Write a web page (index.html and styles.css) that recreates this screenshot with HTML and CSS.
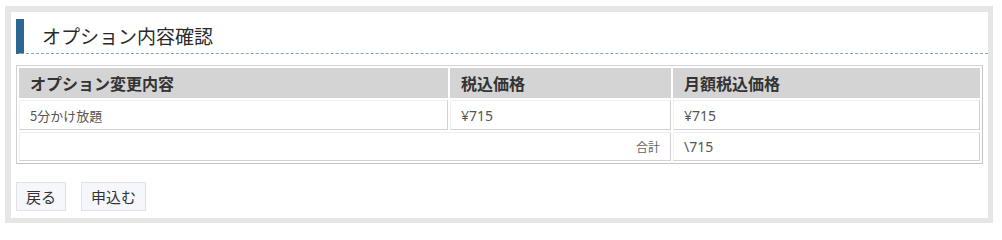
FILE: index.html
```html
<!DOCTYPE html>
<html lang="ja">
<head>
<meta charset="utf-8">
<title>オプション内容確認</title>
<link rel="stylesheet" href="styles.css">
</head>
<body>
<div class="frame">
  <h2 class="heading">オプション内容確認</h2>
  <table class="options">
    <colgroup>
      <col class="c1"><col class="c2"><col class="c3">
    </colgroup>
    <thead>
      <tr><th>オプション変更内容</th><th>税込価格</th><th>月額税込価格</th></tr>
    </thead>
    <tbody>
      <tr><td>5分かけ放題</td><td class="num">¥715</td><td class="num">¥715</td></tr>
      <tr><td colspan="2" class="total-label">合計</td><td class="num">\715</td></tr>
    </tbody>
  </table>
  <div class="actions">
    <button class="btn" type="button">戻る</button>
    <button class="btn" type="button">申込む</button>
  </div>
</div>
</body>
</html>
```
FILE: styles.css
```css
html, body {
  margin: 0;
  padding: 0;
  background: #ffffff;
}
body {
  font-family: "Noto Sans CJK JP", "Noto Sans", sans-serif;
  color: #333333;
}
.frame {
  margin: 6px 9px 9px 5px;
  border-style: solid;
  border-color: #e6e6e6;
  border-width: 6px 5px 5px 6px;
  background: #ffffff;
  padding: 7px 5px 7px 5px;
}
.heading {
  margin: 0 -5px 11px 0;
  height: 34px;
  border-left: 8px solid #2b6790;
  border-bottom: 1px dashed #7fa6c9;
  padding-left: 18px;
  font-size: 19px;
  font-weight: normal;
  line-height: 34px;
  color: #2a2a2a;
}
.options {
  width: 100%;
  table-layout: fixed;
  border-collapse: separate;
  border-spacing: 2px;
  border: 1px solid #d2d2d2;
  border-right-color: #c4c4c4;
  border-bottom-color: #c4c4c4;
}
.c1 { width: 429px; }
.c2 { width: 221px; }
.c3 { width: 307px; }
.options th {
  background: #d4d4d4;
  border: 1px solid #d4d4d4;
  height: 30px;
  padding: 0 10px;
  box-sizing: border-box;
  text-align: left;
  font-size: 16px;
  font-weight: bold;
  color: #333333;
}
.options td {
  border: 1px solid;
  border-color: #f0f0f0 #d2d2d2 #d2d2d2 #f0f0f0;
  height: 30px;
  padding: 0 10px;
  box-sizing: border-box;
  font-size: 13px;
  color: #555555;
}
.options td.num {
  font-family: "Noto Sans", "Noto Sans CJK JP", sans-serif;
  font-size: 14px;
}
.options tbody tr:last-child td {
  height: 29px;
}
.options td.total-label {
  text-align: right;
  font-size: 12px;
  color: #666666;
}
.actions {
  margin-top: 18px;
  display: flex;
  gap: 15px;
}
.btn {
  height: 29px;
  padding: 0 9px;
  border: 1px solid #e2e2e2;
  background: #f5f7fc;
  font-family: "Noto Sans CJK JP", "Noto Sans", sans-serif;
  font-size: 15px;
  line-height: 27px;
  color: #333333;
  border-radius: 0;
}
```
